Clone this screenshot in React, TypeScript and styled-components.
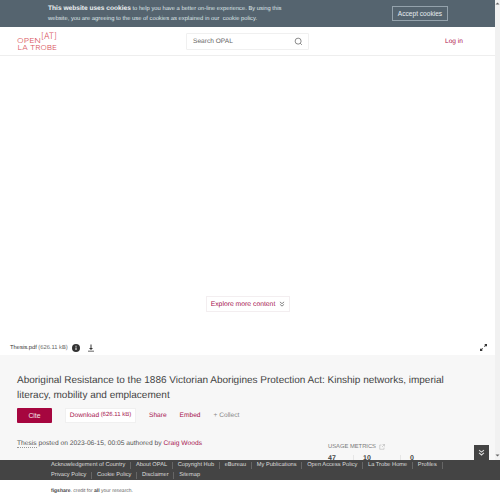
import React from "react";
import styled, { createGlobalStyle } from "styled-components";

const Global = createGlobalStyle`
  html, body { margin: 0; padding: 0; height: 500px; overflow: hidden; background: #fff; }
  body { font-family: "Liberation Sans", Arial, sans-serif; text-rendering: geometricPrecision; }
`;
const Root = styled.div`
  position: relative; width: 500px; height: 500px; display: flex; flex-direction: column; overflow: hidden;
`;
const Main = styled.div`
  height: 460px; display: flex; flex: none;
`;
const Page = styled.div`
  width: 495px; display: flex; flex-direction: column; flex: none;
`;
const Scrollbar = styled.div`
  flex: 1; background: #f1f1f1; display: flex; flex-direction: column; justify-content: space-between; align-items: center; padding: 1px 0 2px;
`;
const Banner = styled.div`
  height: 27px; background: #55646f; display: flex; align-items: center; padding: 0 47px 0 48px; box-sizing: border-box; flex: none;
  justify-content: space-between; color: #dfe4e8; font-size: 5.8px; line-height: 10.5px;
`;
const BannerText = styled.div`width: 245px; padding-top: 1px; b { font-weight: 700; font-size: 6.6px; color: #eef1f3; }`;
const AcceptButton = styled.button`
  width: 56px; height: 15px; background: transparent; border: 1px solid #94a2ac; color: #e8ecef;
  font: 6.6px "Liberation Sans", sans-serif; padding: 0; flex: none;
`;
const Header = styled.header`
  height: 29px; box-sizing: border-box; border-bottom: 1px solid #eeeeee; display: grid; grid-template-columns: 186px 123px 1fr; align-items: center; flex: none;
`;
const LogoWrap = styled.div`padding: 2px 0 0 16px; display: flex;`;
const SearchBox = styled.div`
  height: 15px; border: 1px solid #f0f0f0; border-radius: 1px; display: flex; align-items: center; justify-content: space-between; padding: 0 5px 0 6px;
  font-size: 6.6px; color: #666;
`;
const LogIn = styled.a`
  justify-self: end; margin-right: 32px; font-size: 6.6px; color: #b0124f;
`;
const Viewer = styled.div`
  height: 299px; flex: none; display: flex; flex-direction: column; justify-content: flex-end;
`;
const ExploreRow = styled.div`display: flex; justify-content: center; margin: 0 0 28px 1px;`;
const ExploreButton = styled.div`
  width: 84px; height: 16px; border: 1px solid #f3eef0; box-sizing: border-box; display: flex; align-items: center; justify-content: center; gap: 4px;
  color: #a6134e; font-size: 6.8px;
`;
const FileBar = styled.div`
  height: 15px; padding: 0 8px 0 10px; display: flex; align-items: center; font-size: 5.8px; color: #333;
`;
const FileSize = styled.span`color: #666; margin-left: 1.5px;`;
const FileIcons = styled.div`display: flex; align-items: center; gap: 7px; margin-left: 4px;`;
const Expand = styled.div`margin-left: auto; display: flex;`;
const Details = styled.section`
  flex: 1; background: #f7f7f7; padding: 18px 17px 0 17px; box-sizing: border-box; overflow: hidden; position: relative;
`;
const Title = styled.h1`
  margin: 0; font-weight: 400; font-size: 10px; line-height: 15px; color: #444; width: 450px;
`;
const Actions = styled.div`display: flex; align-items: center; margin-top: 4px; height: 16px; font-size: 6.6px; color: #a6134e;`;
const CiteButton = styled.button`
  width: 35px; height: 15px; background: #a6063f; color: #f5e6ea; border: none; border-radius: 1px; font: 6.8px "Liberation Sans", sans-serif; padding: 0;
`;
const DownloadButton = styled.div`
  margin-left: 13px; width: 71px; height: 15px; background: #fff; border: 1px solid #f0f0f0; box-sizing: border-box; display: flex; align-items: center; justify-content: center;
`;
const Small = styled.span`font-size: 6px; margin-left: 1.5px;`;
const ActionLink = styled.a<{ $gap: number; $muted?: boolean }>`margin-left: ${p => p.$gap}px; color: ${p => p.$muted ? "#888" : "#a6134e"};`;
const Meta = styled.div`
  margin-top: 16px; font-size: 6.7px; line-height: 10px; color: #555;
`;
const Dotted = styled.span`border-bottom: 1px dotted #999;`;
const Author = styled.span`color: #a6134e;`;
const Usage = styled.div`
  position: absolute; left: 328px; top: 89px; width: 150px; font-size: 5.8px; color: #777;
`;
const UsageTitle = styled.div`display: flex; align-items: center; gap: 3px;`;
const Metrics = styled.div`display: grid; grid-template-columns: 25px 47px 20px; margin-top: 5px; font-size: 7px; font-weight: 700; color: #444;`;
const Metric = styled.span`
  & + & { border-left: 1px solid #e6e6e6; padding-left: 9px; }
`;
const Footer = styled.footer`
  height: 20px; flex: none; background: #444; padding: 0.5px 0 0 51px; color: #ddd; font-size: 5.7px; line-height: 10px; box-sizing: border-box;
`;
const FootRow = styled.div`display: flex; align-items: center; height: 10px;`;
const FootLink = styled.span<{ $end?: boolean }>`
  padding-right: 4.8px; margin-right: 4.8px; border-right: 1px solid #666; line-height: 7px;
  &:last-child { border-right: ${p => p.$end ? "1px solid #666" : "none"}; }
`;
const Credit = styled.div`
  padding: 8px 0 0 51px; font-size: 5px; color: #666; b { color: #444; }
`;
const Collapse = styled.div`
  position: absolute; left: 474px; top: 445px; width: 15px; height: 15px; background: #444; display: flex; align-items: center; justify-content: center;
`;

const DoubleChevron = ({ color = "#777", size = 6 }: { color?: string; size?: number }) => (
  <svg width={size} height={size} viewBox="0 0 10 10" fill="none" stroke={color} strokeWidth="1.5"><path d="M1.5 1.5 5 4.5l3.5-3M1.5 5.5 5 8.5l3.5-3" /></svg>
);
const Logo = () => (
  <svg width="42" height="20" viewBox="0 0 42 20" fill="#d9545e" fontFamily="'Inter', sans-serif" fontWeight="300" fontSize="6.8">
    <text x="1" y="11" textLength="24" lengthAdjust="spacingAndGlyphs">OPEN</text>
    <text x="1.500" y="18" textLength="39.500" lengthAdjust="spacingAndGlyphs">LA TROBE</text>
    <text x="25" y="7" fontSize="9" textLength="16" lengthAdjust="spacingAndGlyphs">[AT]</text>
  </svg>
);

export default function App() {
  return (
    <Root>
      <Global />
      <Main>
        <Page>
          <Banner>
            <BannerText>
              <b>This website uses cookies</b> to help you have a better on-line experience. By using this website, you are agreeing to the use of cookies as explained in our&nbsp; cookie policy.
            </BannerText>
            <AcceptButton>Accept cookies</AcceptButton>
          </Banner>
          <Header>
            <LogoWrap><Logo /></LogoWrap>
            <SearchBox>
              <span>Search OPAL</span>
              <svg width="9" height="9" viewBox="0 0 24 24" fill="none" stroke="#666" strokeWidth="2"><circle cx="11" cy="11" r="8" /><path d="m21 21-4.300-4.300" /></svg>
            </SearchBox>
            <LogIn>Log in</LogIn>
          </Header>
          <Viewer>
            <ExploreRow>
              <ExploreButton>Explore more content <DoubleChevron /></ExploreButton>
            </ExploreRow>
            <FileBar>
              Thesis.pdf <FileSize>(626.11 kB)</FileSize>
              <FileIcons>
                <svg width="8" height="8" viewBox="0 0 16 16"><circle cx="8" cy="8" r="8" fill="#333" /><path d="M7 7h2v5H7zM7 3.500h2v2H7z" fill="#fff" /></svg>
                <svg width="8" height="8" viewBox="0 0 16 16" fill="#333"><path d="M7 1h2v7h3l-4 4-4-4h3zM2 13.500h12V15H2z" /></svg>
              </FileIcons>
              <Expand>
                <svg width="7" height="7" viewBox="0 0 14 14" fill="#333"><path d="M14 0v5.500l-2-2L9.500 6 8 4.500 10.500 2l-2-2zM0 14V8.500l2 2L4.500 8 6 9.500 3.500 12l2 2z" /></svg>
              </Expand>
            </FileBar>
          </Viewer>
          <Details>
            <Title>Aboriginal Resistance to the 1886 Victorian Aborigines Protection Act: Kinship networks, imperial literacy, mobility and emplacement</Title>
            <Actions>
              <CiteButton>Cite</CiteButton>
              <DownloadButton>Download<Small>(626.11 kB)</Small></DownloadButton>
              <ActionLink $gap={13}>Share</ActionLink>
              <ActionLink $gap={13}>Embed</ActionLink>
              <ActionLink $gap={13} $muted>+ Collect</ActionLink>
            </Actions>
            <Meta><Dotted>Thesis</Dotted> posted on 2023-06-15, 00:05 authored by <Author>Craig Woods</Author></Meta>
            <Usage>
              <UsageTitle>USAGE METRICS
                <svg width="6" height="6" viewBox="0 0 12 12" fill="none" stroke="#aaa"><path d="M5 2H1.500v8.500H10V7M7 1h4v4M11 1 6 6" /></svg>
              </UsageTitle>
              <Metrics><Metric>47</Metric><Metric>10</Metric><Metric>0</Metric></Metrics>
            </Usage>
          </Details>
        </Page>
        <Scrollbar>
          <svg width="5" height="5" viewBox="0 0 5 5"><path d="M2.500 1.500 4.500 3.500h-4z" fill="#666" /></svg>
          <svg width="5" height="5" viewBox="0 0 5 5"><path d="M2.500 3.500 4.500 1.500h-4z" fill="#666" /></svg>
        </Scrollbar>
      </Main>
      <Footer>
        <FootRow>
          {["Acknowledgement of Country", "About OPAL", "Copyright Hub", "eBureau", "My Publications", "Open Access Policy", "La Trobe Home", "Profiles"].map(t => <FootLink key={t} $end>{t}</FootLink>)}
        </FootRow>
        <FootRow>
          {["Privacy Policy", "Cookie Policy", "Disclaimer", "Sitemap"].map(t => <FootLink key={t}>{t}</FootLink>)}
        </FootRow>
      </Footer>
      <Credit><b>figshare</b>. credit for <b>all</b> your research.</Credit>
      <Collapse><DoubleChevron color="#ddd" size={7} /></Collapse>
    </Root>
  );
}
